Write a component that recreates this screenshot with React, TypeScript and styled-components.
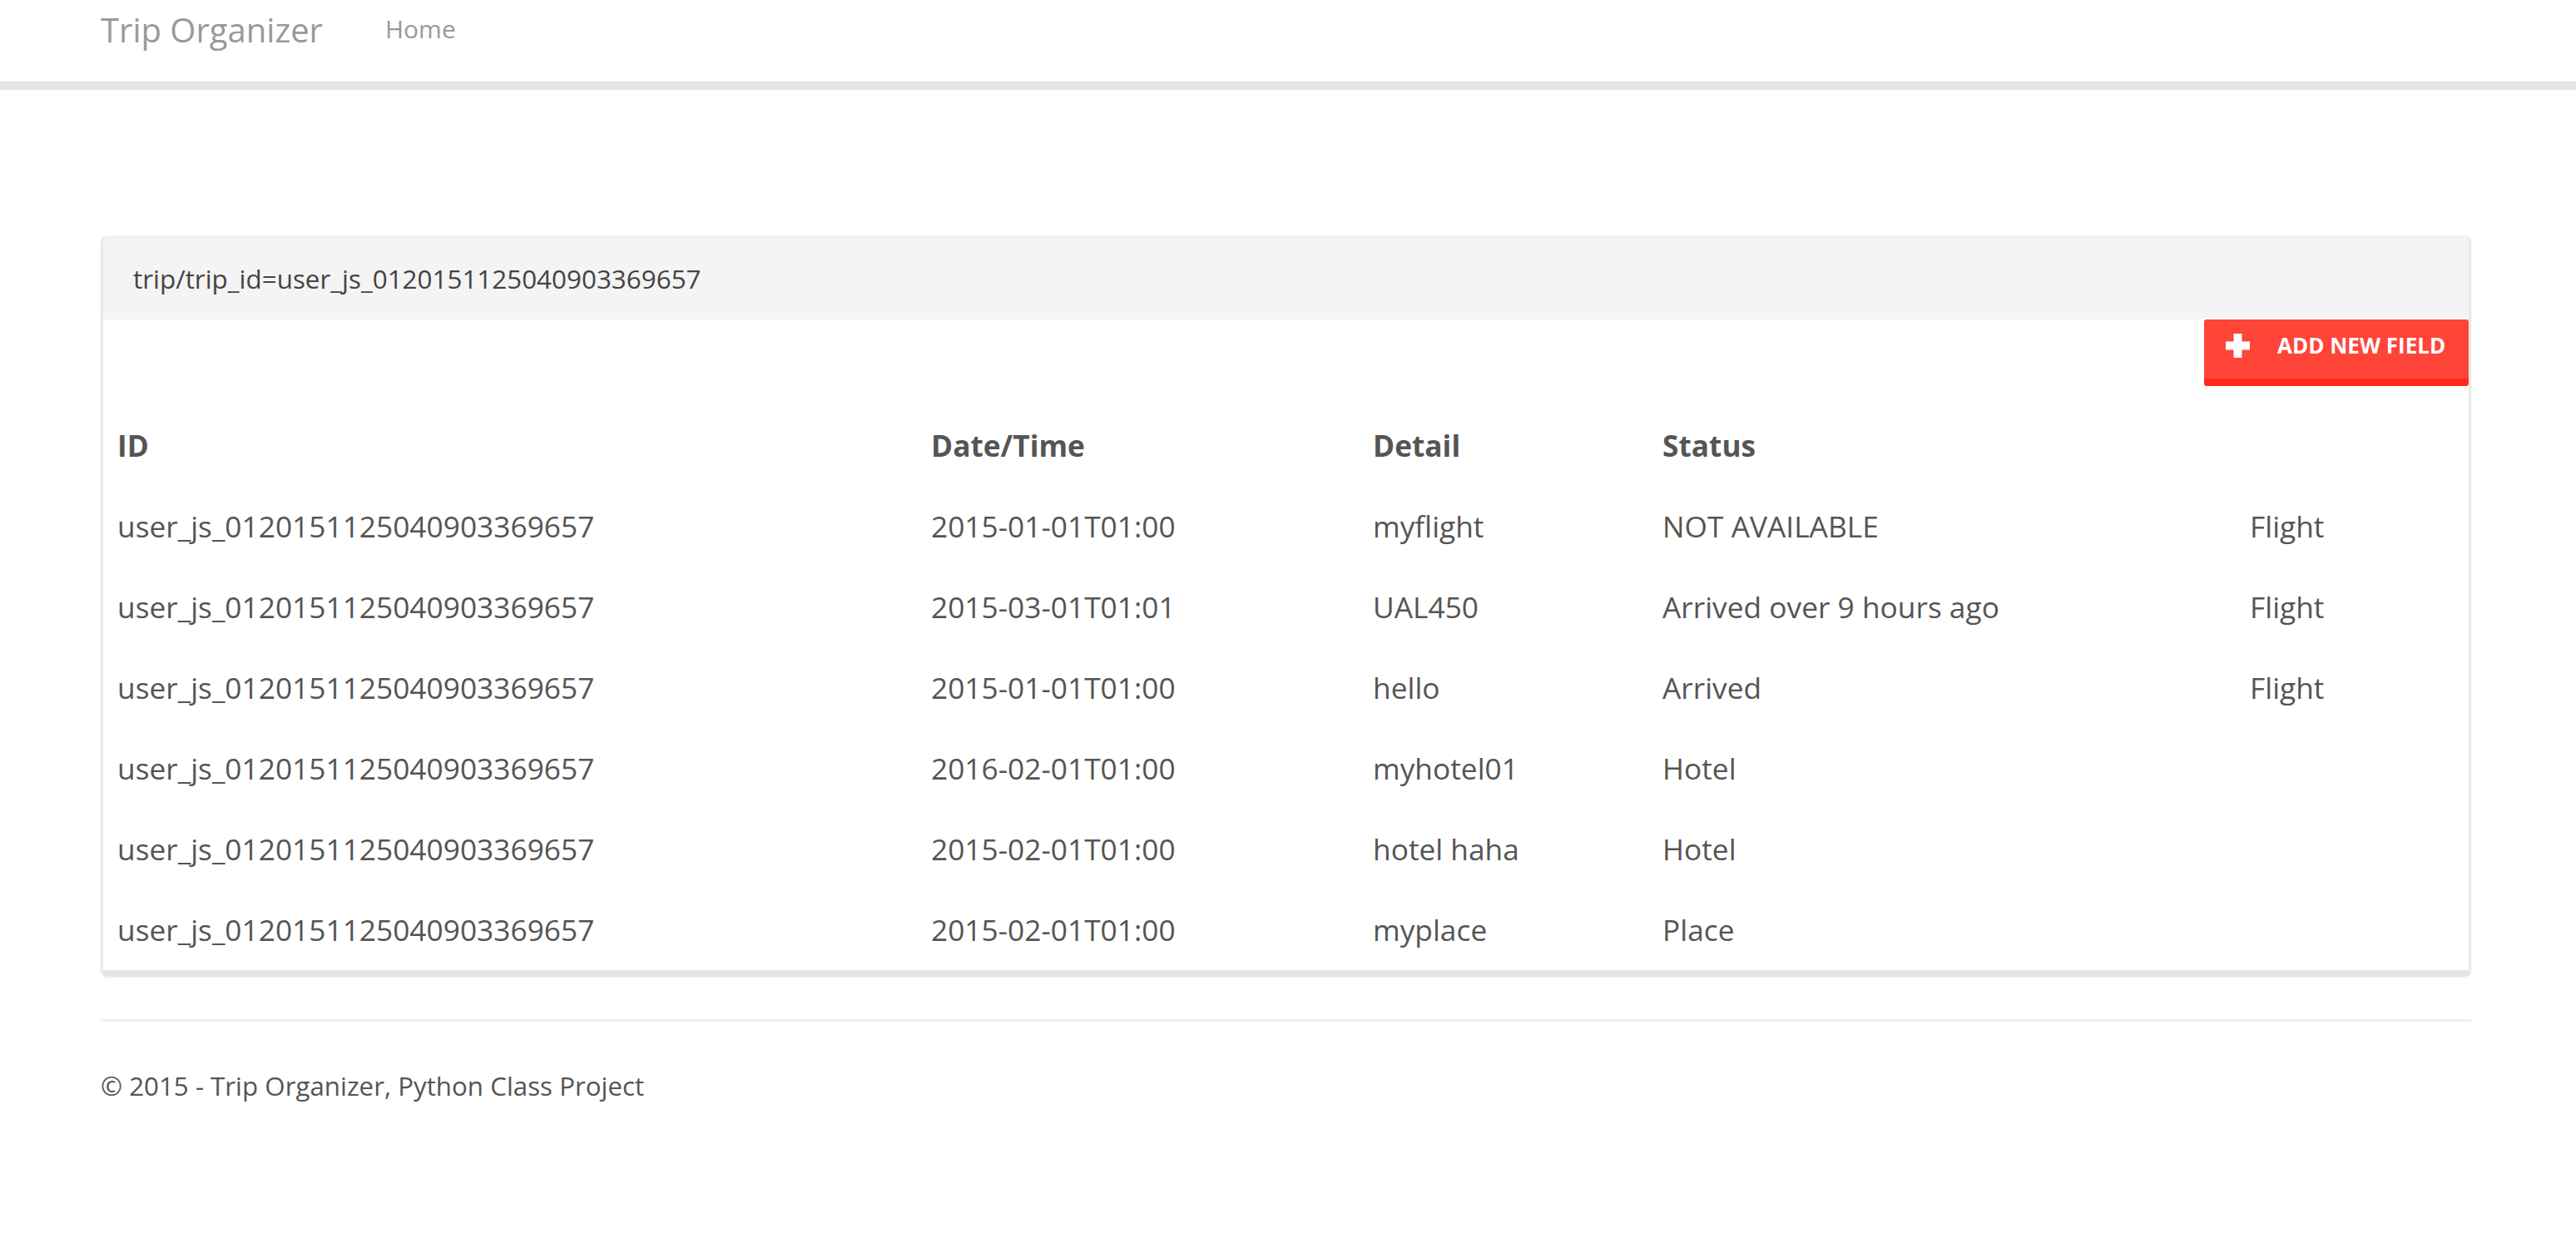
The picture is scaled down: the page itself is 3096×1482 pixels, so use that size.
import styled, { createGlobalStyle } from 'styled-components';

interface Leg {
  id: string;
  when: string;
  detail: string;
  status: string;
  kind: string;
}

const TRIP_ID = 'user_js_0120151125040903369657';

const legs: Leg[] = [
  { id: TRIP_ID, when: '2015-01-01T01:00', detail: 'myflight', status: 'NOT AVAILABLE', kind: 'Flight' },
  { id: TRIP_ID, when: '2015-03-01T01:01', detail: 'UAL450', status: 'Arrived over 9 hours ago', kind: 'Flight' },
  { id: TRIP_ID, when: '2015-01-01T01:00', detail: 'hello', status: 'Arrived', kind: 'Flight' },
  { id: TRIP_ID, when: '2016-02-01T01:00', detail: 'myhotel01', status: 'Hotel', kind: '' },
  { id: TRIP_ID, when: '2015-02-01T01:00', detail: 'hotel haha', status: 'Hotel', kind: '' },
  { id: TRIP_ID, when: '2015-02-01T01:00', detail: 'myplace', status: 'Place', kind: '' },
];

const App = () => {
  return (
    <>
      <GlobalStyle />
      <Navbar>
        <NavInner>
          <Brand href="#">Trip Organizer</Brand>
          <NavLink href="#">Home</NavLink>
        </NavInner>
      </Navbar>

      <Container>
        <Panel>
          <PanelHeading>trip/trip_id={TRIP_ID}</PanelHeading>
          <PanelBody>
            <Toolbar>
              <AddButton type="button">
                <svg width="29" height="29" viewBox="0 0 29 29">
                  <rect x="9.5" y="0" width="10" height="29" fill="#fff" />
                  <rect x="0" y="9.5" width="29" height="10" fill="#fff" />
                </svg>
                <span>ADD NEW FIELD</span>
              </AddButton>
            </Toolbar>

            <Table>
              <colgroup>
                <col style={{ width: 978 }} />
                <col style={{ width: 531 }} />
                <col style={{ width: 348 }} />
                <col style={{ width: 706 }} />
                <col />
              </colgroup>
              <thead>
                <tr>
                  <th>ID</th>
                  <th>Date/Time</th>
                  <th>Detail</th>
                  <th>Status</th>
                  <th></th>
                </tr>
              </thead>
              <tbody>
                {legs.map((leg, i) => (
                  <tr key={i}>
                    <td>{leg.id}</td>
                    <td>{leg.when}</td>
                    <td>{leg.detail}</td>
                    <td>{leg.status}</td>
                    <td>{leg.kind}</td>
                  </tr>
                ))}
              </tbody>
            </Table>
          </PanelBody>
        </Panel>

        <Rule />
        <Footer>© 2015 - Trip Organizer, Python Class Project</Footer>
      </Container>
    </>
  );
};

const GlobalStyle = createGlobalStyle`
  html, body {
    margin: 0;
    padding: 0;
    background: #fff;
  }

  body {
    font-family: "Open Sans", "Liberation Sans", sans-serif;
    color: #555;
  }

  * {
    box-sizing: border-box;
  }
`;

const Navbar = styled.nav`
  height: 108px;
  background: #fff;
  border-bottom: 10px solid #e5e5e5;
`;

const NavInner = styled.div`
  display: flex;
  align-items: flex-start;
  gap: 75px;
  height: 98px;
  padding: 0 121px;
`;

const Brand = styled.a`
  padding-top: 16px;
  font-size: 40px;
  line-height: 1;
  color: #999;
  text-decoration: none;
`;

const NavLink = styled.a`
  padding-top: 20px;
  font-size: 30px;
  line-height: 1;
  color: #999;
  text-decoration: none;
`;

const Container = styled.div`
  width: 2849px;
  margin: 175px 0 0 121px;
`;

const Panel = styled.section`
  background: #fff;
  border: 3px solid #e9e9e9;
  border-top: none;
  border-bottom: 8px solid #e5e5e5;
  border-radius: 8px;
  box-shadow: 0 2px 3px rgba(0, 0, 0, 0.04);
  overflow: hidden;
`;

const PanelHeading = styled.div`
  height: 101px;
  padding: 30px 36px 0;
  background: #f4f4f4;
  font-size: 31.4px;
  line-height: 43px;
  color: #444;
`;

const PanelBody = styled.div`
  display: flex;
  flex-direction: column;
`;

const Toolbar = styled.div`
  display: flex;
  justify-content: flex-end;
`;

const AddButton = styled.button`
  display: flex;
  align-items: center;
  gap: 33px;
  width: 318px;
  height: 80px;
  padding: 0 0 9px 26px;
  border: none;
  border-bottom: 9px solid #ff2a1c;
  border-radius: 3px;
  background: #ff4438;
  color: #fff;
  font-family: "Open Sans", "Liberation Sans", sans-serif;
  font-weight: 700;
  font-size: 26px;
  line-height: 1;
  cursor: pointer;

  svg {
    flex: none;
  }
`;

const Table = styled.table`
  width: 100%;
  margin-top: 23px;
  border-collapse: collapse;
  table-layout: fixed;

  th, td {
    padding: 24px 17px;
    font-size: 35.3px;
    line-height: 49px;
    text-align: left;
    color: #555;
    white-space: nowrap;
  }

  th {
    font-weight: 700;
  }
`;

const Rule = styled.hr`
  margin: 51px 0 0;
  border: none;
  border-top: 3px solid #eee;
`;

const Footer = styled.footer`
  padding-top: 56px;
  font-size: 31.3px;
  line-height: 1.4;
  color: #555;
`;

export default App;
